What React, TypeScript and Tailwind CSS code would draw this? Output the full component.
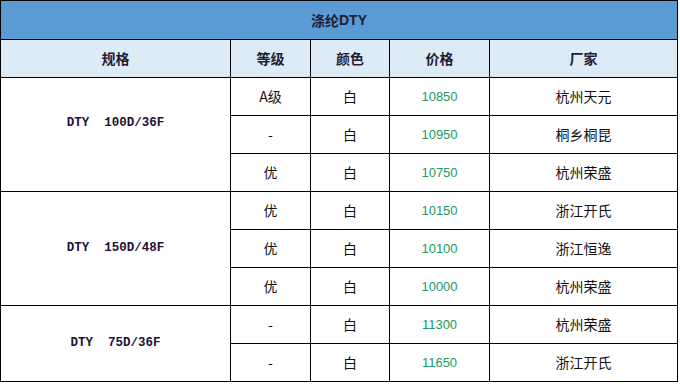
const rows = [
  {
    spec: "DTY  100D/36F",
    span: "row-span-3",
    pad: "pb-[23px]",
    items: [
      ["A级", "白", "10850", "杭州天元"],
      ["-", "白", "10950", "桐乡桐昆"],
      ["优", "白", "10750", "杭州荣盛"],
    ],
  },
  {
    spec: "DTY  150D/48F",
    span: "row-span-3",
    pad: "",
    items: [
      ["优", "白", "10150", "浙江开氏"],
      ["优", "白", "10100", "浙江恒逸"],
      ["优", "白", "10000", "杭州荣盛"],
    ],
  },
  {
    spec: "DTY  75D/36F",
    span: "row-span-2",
    pad: "",
    items: [
      ["-", "白", "11300", "杭州荣盛"],
      ["-", "白", "11650", "浙江开氏"],
    ],
  },
]

const cjk = "font-['Noto_Sans_CJK_SC',sans-serif]"

export default function App() {
  return (
    <div className="bg-white w-[680px] h-[384px]">
      <div className={`grid grid-cols-[229px_79px_78px_99px_187px] grid-rows-[38px_37px_repeat(8,37px)] gap-px bg-black p-px w-fit text-[14px] text-[#111] ${cjk}`}>
        <div className="col-span-5 bg-[#5b9bd5] flex items-center justify-center font-bold text-[#1d1d33]">
          涤纶<span className="font-['Liberation_Sans',sans-serif]">DTY</span>
        </div>
        {["规格", "等级", "颜色", "价格", "厂家"].map((h) => (
          <div key={h} className="bg-[#ddebf7] flex items-center justify-center font-bold text-[#1d1d33]">
            {h}
          </div>
        ))}
        {rows.map((g) => (
          <>
            <div
              key={g.spec}
              className={`${g.span} ${g.pad} bg-white flex items-center justify-center font-bold whitespace-pre text-[12.5px] text-[#241038] font-['Liberation_Mono',monospace]`}
            >
              {g.spec}
            </div>
            {g.items.map((r, i) => (
              <>
                <div key={g.spec + i + "a"} className="bg-white flex items-center justify-center">
                  {r[0]}
                </div>
                <div key={g.spec + i + "b"} className="bg-white flex items-center justify-center">
                  {r[1]}
                </div>
                <div key={g.spec + i + "c"} className="bg-white flex items-center justify-center text-[13px] text-[#1a9a60] font-['Liberation_Sans',sans-serif]">
                  {r[2]}
                </div>
                <div key={g.spec + i + "d"} className="bg-white flex items-center justify-center">
                  {r[3]}
                </div>
              </>
            ))}
          </>
        ))}
      </div>
    </div>
  )
}
